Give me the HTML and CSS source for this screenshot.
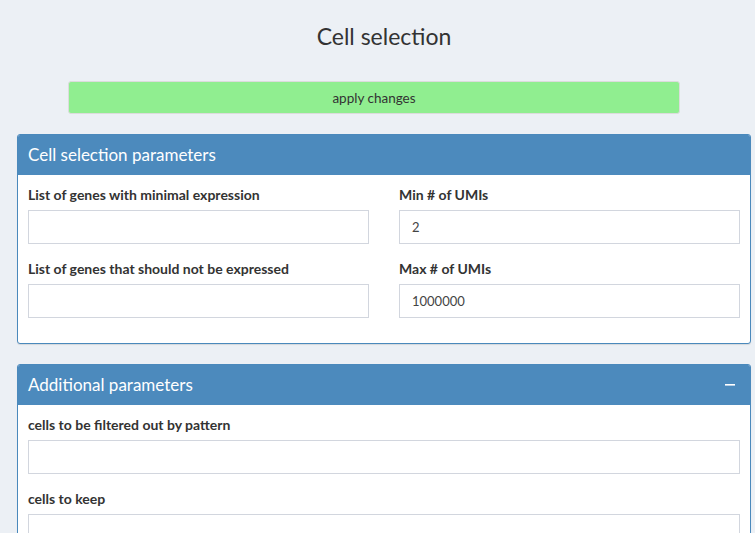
FILE: index.html
```html
<!DOCTYPE html>
<html>
<head>
<meta charset="utf-8">
<link rel="stylesheet" href="styles.css">
</head>
<body>
<div class="page">
  <h3 class="title">Cell selection</h3>
  <div class="btn-row"><button class="apply">apply changes</button></div>
  <div class="box">
    <div class="box-header"><span class="box-title">Cell selection parameters</span></div>
    <div class="box-body grid2">
      <div class="col">
        <div class="form-group"><label>List of genes with minimal expression</label><input type="text" value=""></div>
        <div class="form-group"><label>List of genes that should not be expressed</label><input type="text" value=""></div>
      </div>
      <div class="col">
        <div class="form-group"><label>Min # of UMIs</label><input type="text" value="2"></div>
        <div class="form-group"><label>Max # of UMIs</label><input type="text" value="1000000"></div>
      </div>
    </div>
  </div>
  <div class="box">
    <div class="box-header"><span class="box-title">Additional parameters</span>
      <span class="tool"><svg width="10" height="10" viewBox="0 0 10 10"><rect x="0" y="4" width="10" height="1.6" fill="#fff"/></svg></span>
    </div>
    <div class="box-body">
      <div class="form-group"><label>cells to be filtered out by pattern</label><input type="text" value=""></div>
      <div class="form-group"><label>cells to keep</label><input type="text" value=""></div>
    </div>
  </div>
</div>
</body>
</html>
```
FILE: styles.css
```css
html, body { margin: 0; padding: 0; }
body {
  background: #ecf0f5;
  font-family: "Lato", "Liberation Sans", sans-serif;
  font-size: 14px;
  color: #333;
  overflow: hidden;
}
.page { padding: 0 4px 0 17px; }
.title {
  margin: 0;
  padding-top: 21px;
  height: 59px;
  box-sizing: border-box;
  text-align: center;
  font-size: 23px;
  font-weight: 400;
  line-height: 30px;
  color: #333;
}
.btn-row { padding-left: 51px; height: 53px; }
.apply {
  display: block;
  width: 612px;
  height: 33px;
  margin-top: 22px;
  background: #90ee90;
  border: 1px solid #dcdcdc;
  border-radius: 3px;
  font-family: inherit;
  font-size: 13.5px;
  color: #333;
}
.box {
  border: 1px solid #4a89bc;
  border-radius: 3px;
  background: #fff;
  margin-bottom: 20px;
  box-shadow: 0 1px 1px rgba(0,0,0,0.1);
  overflow: hidden;
}
.box-header {
  background: #4c8abd;
  height: 40px;
  display: flex;
  align-items: center;
  justify-content: space-between;
  padding: 0 15px 0 10px;
  color: #fff;
}
.box-title { font-size: 17px; line-height: 20px; }
.tool { display: flex; }
.box-body { padding: 10px; }
.grid2 { display: grid; grid-template-columns: 1fr 1fr; column-gap: 30px; }
.form-group { margin-bottom: 15px; }
label {
  display: block;
  font-weight: 700;
  font-size: 14px;
  line-height: 20px;
  margin-bottom: 5px;
}
input {
  display: block;
  width: 100%;
  box-sizing: border-box;
  height: 34px;
  border: 1px solid #d2d6de;
  padding: 6px 12px;
  font-family: inherit;
  font-size: 13px;
  color: #444;
  outline: none;
}
```
